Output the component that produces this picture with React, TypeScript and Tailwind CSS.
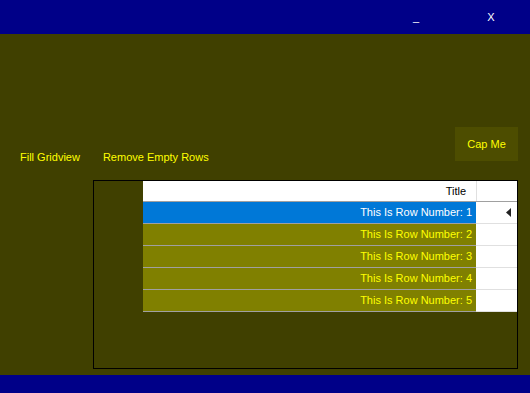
const rows = [1, 2, 3, 4, 5];

export default function App() {
  return (
    <div
      className="w-[530px] h-[393px] bg-[#404000] flex flex-col text-[11px]"
      style={{ fontFamily: "Tahoma, 'Liberation Sans', sans-serif" }}
    >
      <div className="h-[34px] bg-[#000088] flex items-start text-white shrink-0">
        <span className="ml-[413px] mt-[12px] leading-none">_</span>
        <span className="ml-[68px] mt-[12px] leading-none">X</span>
      </div>

      <div className="flex-1 flex flex-col">
        <div className="flex items-start h-[146px] pt-[93px] text-[#ffff00]">
          <span className="ml-[20px] mt-[25px] leading-none">Fill Gridview</span>
          <span className="ml-[23px] mt-[25px] leading-none">Remove Empty Rows</span>
          <div className="ml-auto mr-[12px] w-[63px] h-[34px] bg-[#4d4d00] flex items-center justify-center">
            Cap Me
          </div>
        </div>

        <div className="ml-[93px] w-[425px] h-[189px] border border-black flex">
          <div className="ml-[49px] w-[374px] flex flex-col">
            <div className="flex h-[21px] bg-white border-b border-[#a0a0a0]">
              <div className="w-[333px] flex items-center justify-end pr-[10px] text-black">Title</div>
              <div className="flex-1 border-l border-[#e0e0e0]" />
            </div>
            {rows.map((n) => (
              <div key={n} className="flex h-[22px]">
                <div
                  className={
                    n === 1
                      ? "w-[333px] bg-[#0078d7] text-white flex items-center justify-end pr-[4px] border-b border-[#a0a0a0]"
                      : "w-[333px] bg-[#808000] text-[#ffff00] flex items-center justify-end pr-[4px] border-b border-[#a0a0a0]"
                  }
                >
                  This Is Row Number: {n}
                </div>
                <div className="flex-1 bg-white border-b border-[#e0e0e0] flex items-center justify-end pr-[6px]">
                  {n === 1 && (
                    <svg width="5" height="9" viewBox="0 0 5 9">
                      <path d="M5 0 L0 4.5 L5 9 Z" fill="#222" />
                    </svg>
                  )}
                </div>
              </div>
            ))}
          </div>
        </div>
      </div>

      <div className="h-[18px] bg-[#000088] shrink-0" />
    </div>
  );
}
